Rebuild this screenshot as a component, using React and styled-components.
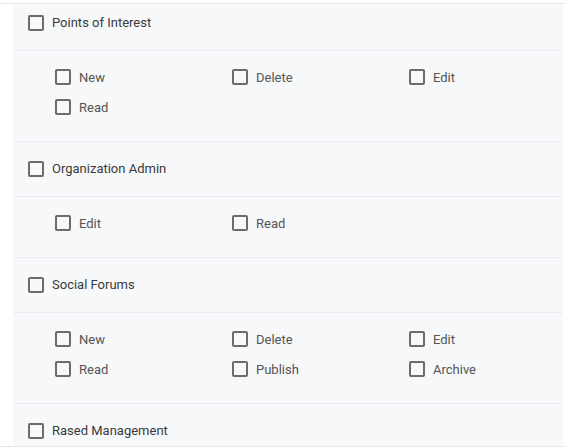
import styled, { createGlobalStyle } from 'styled-components';

const groups = [
  { title: 'Points of Interest', perms: ['New', 'Delete', 'Edit', 'Read'] },
  { title: 'Organization Admin', perms: ['Edit', 'Read'] },
  { title: 'Social Forums', perms: ['New', 'Delete', 'Edit', 'Read', 'Publish', 'Archive'] },
  { title: 'Rased Management', perms: [] },
];

const App = () => {
  return (
    <>
      <GlobalStyle />
      <Frame>
        <Viewport>
          <Panel>
            {groups.map((group) => (
              <Group key={group.title}>
                <GroupHeader>
                  <Check />
                  <GroupTitle>{group.title}</GroupTitle>
                </GroupHeader>
                {group.perms.length > 0 && (
                  <PermGrid>
                    {group.perms.map((perm) => (
                      <PermItem key={perm}>
                        <Check />
                        <PermLabel>{perm}</PermLabel>
                      </PermItem>
                    ))}
                  </PermGrid>
                )}
              </Group>
            ))}
          </Panel>
        </Viewport>
      </Frame>
    </>
  );
};

const GlobalStyle = createGlobalStyle`
  body {
    margin: 0;
    background: #ffffff;
    font-family: Roboto, "Liberation Sans", sans-serif;
  }
`;

const Frame = styled.div`
  padding-top: 3px;
`;

const Viewport = styled.div`
  height: 442px;
  overflow: hidden;
  border-top: 1px solid #e6e6e6;
  border-bottom: 1px solid #e6e6e6;
  margin-right: 5px;
`;

const Panel = styled.div`
  width: 550px;
  margin-left: 13px;
  margin-top: -8px;
  background: #f7f8fa;
  min-height: 460px;
`;

const Group = styled.div``;

const GroupHeader = styled.label`
  height: 54px;
  display: flex;
  align-items: center;
  gap: 8px;
  padding: 0 15px;
  border-bottom: 1px solid #e8ebf1;
  box-sizing: content-box;
  line-height: 15px;
  padding-bottom: 0;
`;

const GroupTitle = styled.span`
  font-size: 13px;
  color: #3a3a3a;
  margin-top: -1px;
`;

const PermGrid = styled.div`
  display: grid;
  grid-template-columns: repeat(3, 177px);
  row-gap: 10px;
  padding: 16px 0 24px 42px;
  border-bottom: 1px solid #e8ebf1;
`;

const PermItem = styled.label`
  height: 20px;
  display: flex;
  align-items: center;
  gap: 8px;
`;

const PermLabel = styled.span`
  font-size: 13px;
  color: #555555;
`;

const Check = styled.span`
  width: 16px;
  height: 16px;
  box-sizing: border-box;
  border: 2px solid #6b6b6b;
  border-radius: 2px;
  flex-shrink: 0;
`;

export default App;
